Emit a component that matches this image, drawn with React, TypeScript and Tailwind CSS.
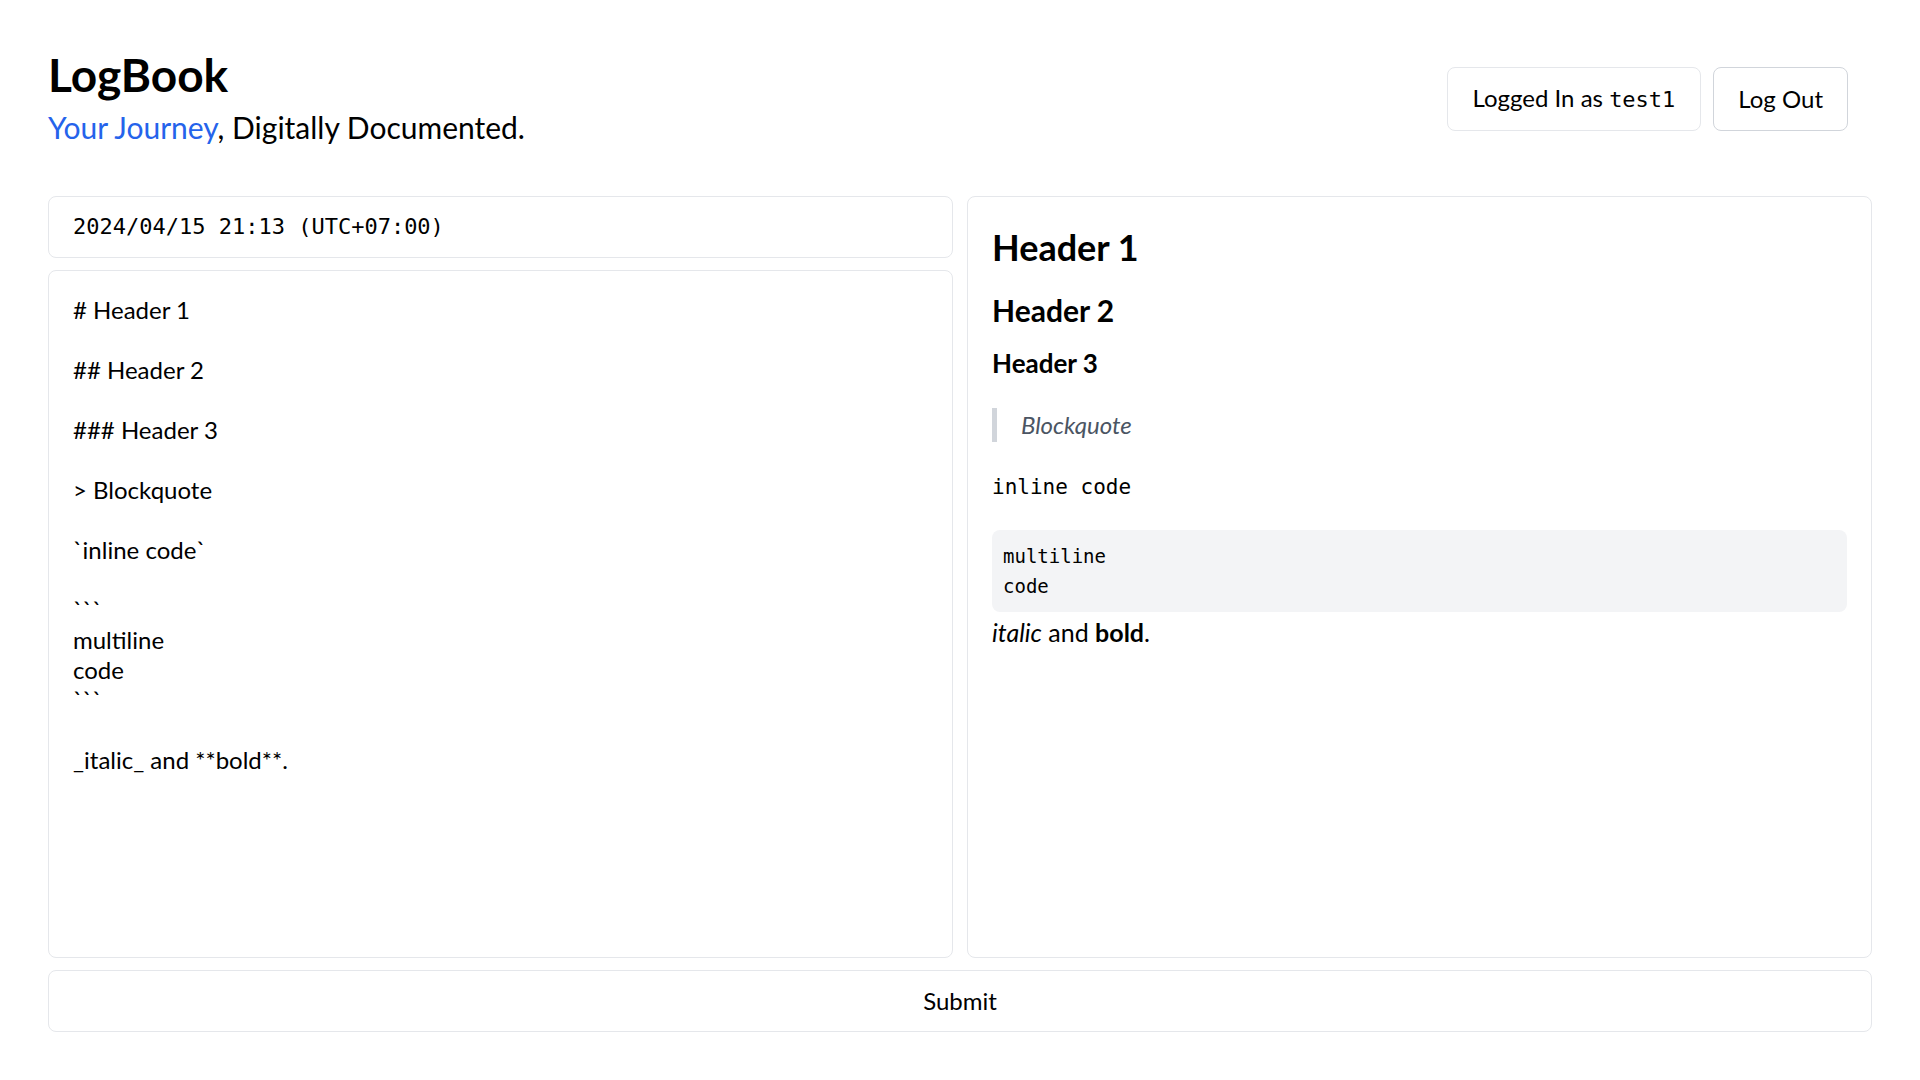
const source = `# Header 1

## Header 2

### Header 3

> Blockquote

\`inline code\`

\`\`\`
multiline
code
\`\`\`

_italic_ and **bold**.`;

export default function App() {
  return (
    <div className="min-h-screen bg-white px-12 pt-[50px] font-['Lato',sans-serif] text-black">
      <header className="flex items-start justify-between">
        <div>
          <h1 className="text-[46px] font-bold leading-[50px]">LogBook</h1>
          <p className="mt-[9px] text-[30px] leading-[36px]">
            <span className="text-[#2563eb]">Your Journey</span>, Digitally
            Documented.
          </p>
        </div>
        <div className="mr-6 mt-[17px] flex gap-3">
          <button className="rounded-lg border border-[#e5e7eb] bg-white px-[25px] py-4 text-2xl leading-7">
            Logged In as{" "}
            <code className="font-['DejaVu_Sans_Mono',monospace] text-[22px]">
              test1
            </code>
          </button>
          <button className="rounded-lg border border-[#d1d5db] bg-white px-6 py-4 text-2xl leading-7">
            Log Out
          </button>
        </div>
      </header>

      <main className="mt-[51px] grid grid-cols-2 gap-[14px]">
        <div className="flex flex-col gap-3">
          <div className="rounded-lg border border-[#e5e7eb] px-6 py-[15px] font-['DejaVu_Sans_Mono',monospace] text-[22px] leading-[30px]">
            2024/04/15 21:13 (UTC+07:00)
          </div>
          <textarea
            defaultValue={source}
            className="h-[688px] w-full resize-none rounded-lg border border-[#e5e7eb] p-6 font-['Lato',sans-serif] text-[24px] leading-[30px] outline-none"
          />
        </div>

        <article className="h-[762px] rounded-lg border border-[#e5e7eb] p-6">
          <h1 className="mt-1 text-[36px] font-bold leading-[44px]">Header 1</h1>
          <h2 className="mt-[23px] text-[30px] font-bold leading-[36px]">Header 2</h2>
          <h3 className="mt-[19px] text-[26px] font-bold leading-[32px]">Header 3</h3>
          <blockquote className="mt-[29px] border-l-[5px] border-[#d1d5db] pl-6 text-[24px] italic leading-[34px] text-[#4b5563]">
            Blockquote
          </blockquote>
          <p className="mt-[30px]">
            <code className="font-['DejaVu_Sans_Mono',monospace] text-[21px] leading-[30px]">
              inline code
            </code>
          </p>
          <pre className="mt-[28px] rounded-lg bg-[#f3f4f6] p-[11px] font-['DejaVu_Sans_Mono',monospace] text-[19px] leading-[30px]">
            {"multiline\ncode"}
          </pre>
          <p className="mt-[5px] text-[25px] leading-[30px]">
            <em>italic</em> and <strong>bold</strong>.
          </p>
        </article>
      </main>

      <button className="mt-3 w-full rounded-lg border border-[#e5e7eb] bg-white py-[15px] text-[24px] leading-[30px]">
        Submit
      </button>
    </div>
  );
}
